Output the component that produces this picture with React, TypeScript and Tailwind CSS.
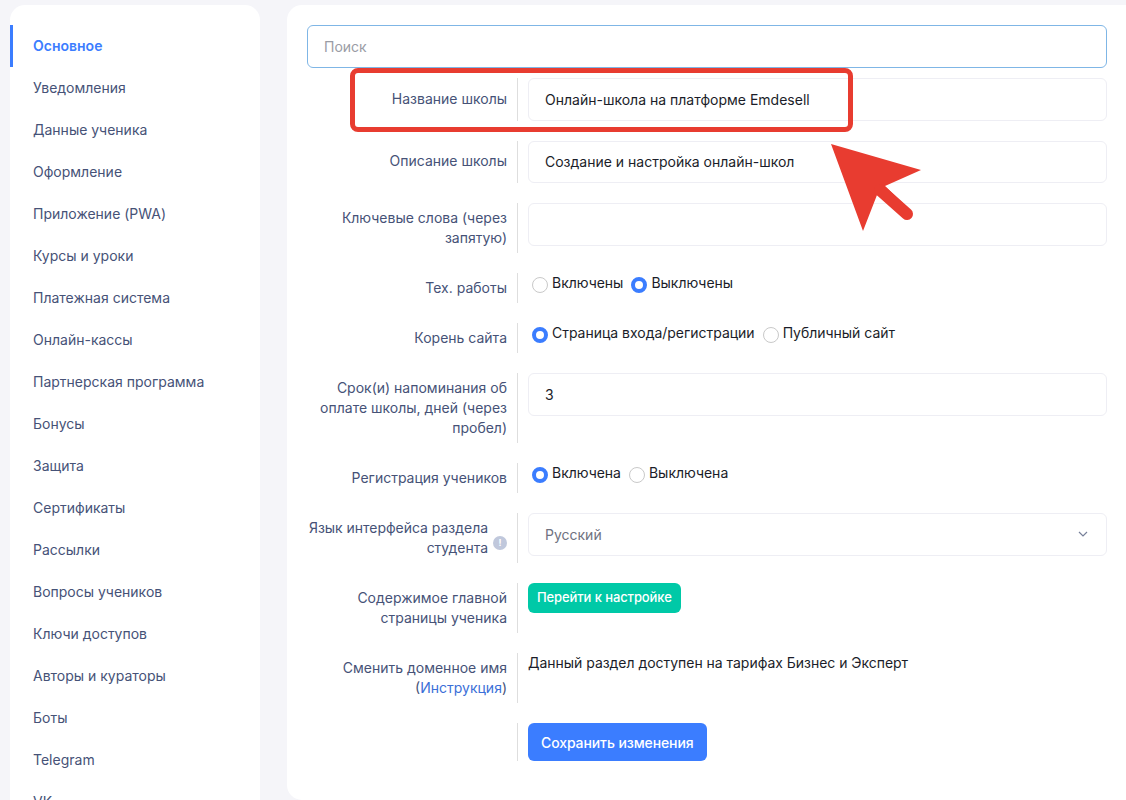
import React from "react";

const nav = ["Уведомления","Данные ученика","Оформление","Приложение (PWA)","Курсы и уроки","Платежная система","Онлайн-кассы","Партнерская программа","Бонусы","Защита","Сертификаты","Рассылки","Вопросы учеников","Ключи доступов","Авторы и кураторы","Боты","Telegram","VK"];

function Row({ label, children, className = "mb-5" }: { label: React.ReactNode; children: React.ReactNode; className?: string }) {
  return (
    <div className={`flex ${className}`}>
      <div className="w-[211px] shrink-0 border-r border-[#dedede] pr-[10px] py-[5px] text-right text-[14px] leading-5 text-[#465277]">
        {label}
      </div>
      <div className="flex-1 pl-[10px] min-w-0">{children}</div>
    </div>
  );
}

function Field({ value }: { value?: string }) {
  return (
    <div className="h-[42.5px] rounded-md border border-[#eeeef4] bg-white px-4 flex items-center text-[14px] text-[#1b1d29]">{value}</div>
  );
}

function Radio({ on, label }: { on?: boolean; label: string }) {
  return (
    <span className="inline-flex items-start mr-2">
      <span className={on ? "mt-[4px] w-4 h-4 rounded-full border-[4px] border-[#3b7dff] bg-white" : "mt-[4px] w-4 h-4 rounded-full border border-[#c9c9c9] bg-white"} />
      <span className="ml-[4px] leading-5 text-[14px] tracking-[-0.02px] text-[#1b1d29]">{label}</span>
    </span>
  );
}

function RadioLine({ children }: { children: React.ReactNode }) {
  return <div className="flex items-start h-[24px] pl-1">{children}</div>;
}

export default function App() {
  return (
    <div className="relative h-[800px] overflow-hidden bg-[#f5f5f9] font-['Inter',sans-serif] flex items-start pl-[10px] pt-[5px]">
      <aside className="w-[250px] h-[900px] shrink-0 rounded-[15px] bg-white pt-5">
        <div className="h-[42px] border-l-[3px] border-[#3b7dff] pl-5 pb-[2px] flex items-center text-[14px] font-semibold text-[#3b7dff]">Основное</div>
        {nav.map((n) => (
          <div key={n} className="h-[42px] pl-[23px] pb-[2px] flex items-center text-[14px] text-[#465277]">{n}</div>
        ))}
      </aside>
      <main className="ml-[27px] flex-1 h-[795px] rounded-l-[15px] bg-white pl-5 pr-[19px] pt-5">
        <div className="h-[43px] rounded-md border border-[#7fb6e6] bg-white px-4 flex items-center text-[14px] text-[#9a9ca5] mb-[10px]">Поиск</div>
        <Row label={<div className="pt-[5.5px]">Название школы</div>}><Field value="Онлайн-школа на платформе Emdesell" /></Row>
        <Row label={<div className="pt-[5.5px]">Описание школы</div>}><Field value="Создание и настройка онлайн-школ" /></Row>
        <Row label="Ключевые слова (через запятую)"><Field /></Row>
        <Row label="Тех. работы"><RadioLine><Radio label="Включены" /><Radio on label="Выключены" /></RadioLine></Row>
        <Row label="Корень сайта"><RadioLine><Radio on label="Страница входа/регистрации" /><Radio label="Публичный сайт" /></RadioLine></Row>
        <Row label="Срок(и) напоминания об оплате школы, дней (через пробел)"><Field value="3" /></Row>
        <Row label="Регистрация учеников"><RadioLine><Radio on label="Включена" /><Radio label="Выключена" /></RadioLine></Row>
        <Row label={
          <div className="flex items-center justify-end">
            <span className="tracking-[-0.03px]">Язык интерфейса раздела студента</span>
            <span className="ml-[5px] mt-[10px] shrink-0 w-[14px] h-[14px] rounded-full bg-[#c0c8dc] text-white text-[9px] font-bold leading-[14px] text-center">!</span>
          </div>
        }>
          <div className="h-[42.5px] rounded-md border border-[#eeeef4] bg-white px-4 flex items-center justify-between text-[14px] text-[#6f7280]">
            Русский
            <svg width="10" height="6" viewBox="0 0 10 6" fill="none" stroke="#77809a" strokeWidth="1.2" className="mr-[2px]"><path d="M1 1l4 4 4-4" /></svg>
          </div>
        </Row>
        <Row label="Содержимое главной страницы ученика">
          <div className="inline-flex h-[30px] items-center rounded-md bg-[#00c9a7] px-[9px] text-[13px] font-medium tracking-[-0.1px] text-white">Перейти к настройке</div>
        </Row>
        <Row label={<div>Сменить доменное имя (<span className="text-[#3b6fd8]">Инструкция</span>)</div>}>
          <div className="text-[14px] leading-5 tracking-[-0.03px] text-[#1b1d29]">Данный раздел доступен на тарифах Бизнес и Эксперт</div>
        </Row>
        <div className="flex">
          <div className="w-[211px] h-[38px] shrink-0 border-r border-[#dedede]" />
          <div className="pl-[10px]">
            <div className="h-[38px] rounded-md bg-[#3b7dff] px-[13px] flex items-center text-[14px] font-medium tracking-[-0.1px] text-white">Сохранить изменения</div>
          </div>
        </div>
      </main>
      <div className="absolute left-[350px] top-[68px] w-[503px] h-[64px] rounded-[8px] border-[5px] border-[#e83c30]" />
      <svg className="absolute left-0 top-0 pointer-events-none" width="1126" height="800" fill="none">
        <path d="M831 144 L921 170 L885 186 L907 207 L877 195 L863 231 Z" fill="#e83c30" />
        <path d="M880 190 L907 214" stroke="#e83c30" strokeWidth="12" strokeLinecap="round" />
      </svg>
    </div>
  );
}
